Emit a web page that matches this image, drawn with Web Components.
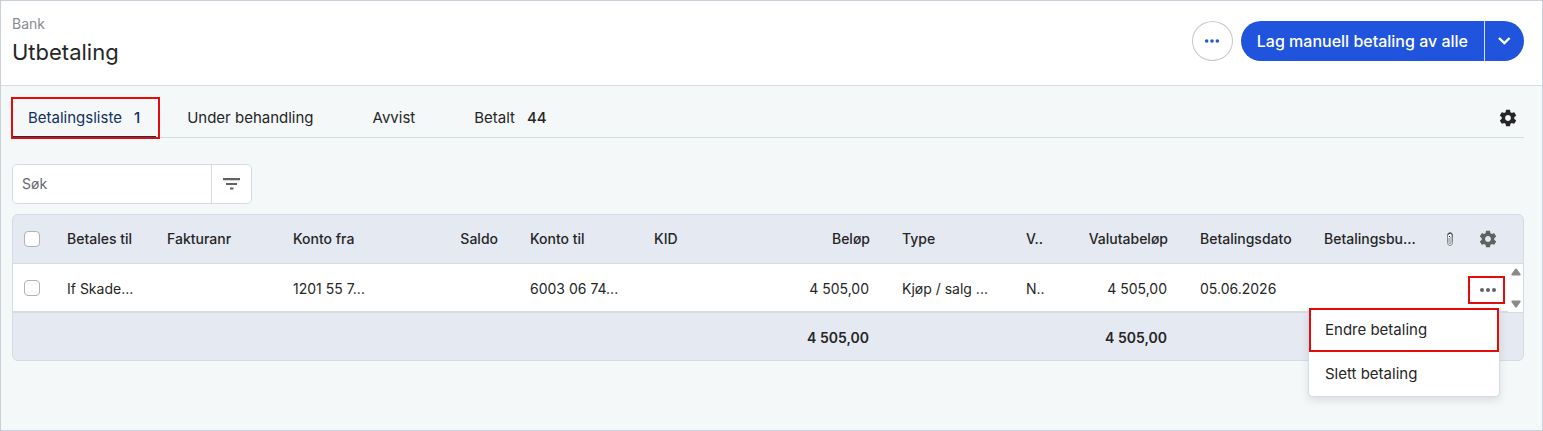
<!DOCTYPE html>
<html lang="no">
<head>
<meta charset="utf-8">
<title>Utbetaling</title>
<style>
  html {
    --text: #262626;
    --muted: #5f6163;
    --line: #d3dbe3;
    --page: #f4f8f9;
    --head: #e5eaf2;
    --primary: #2054dd;
    --active: #15305b;
    --mark: #e60a0a;
  }

  body {
    margin: 0;
    font: 14px/20px Inter, "Liberation Sans", sans-serif;
    color: var(--text);
    background: var(--page);
  }
</style>
</head>
<body>
<payment-app>
  <page-header slot="header" section="Bank" heading="Utbetaling">
    <round-button label="Flere valg"></round-button>
    <split-button>Lag manuell betaling av alle</split-button>
  </page-header>

  <tab-bar>
    <tab-item active count="1"><span>Betalingsliste</span></tab-item>
    <tab-item><span>Under behandling</span></tab-item>
    <tab-item><span>Avvist</span></tab-item>
    <tab-item count="44"><span>Betalt</span></tab-item>
  </tab-bar>

  <search-box placeholder="Søk"></search-box>
  <payment-table></payment-table>
</payment-app>

<script>
const ICONS = {
  gear: `<svg viewBox="0 0 24 24" width="20" height="20" fill="currentColor"><path d="M19.43 12.98c.04-.32.07-.64.07-.98s-.03-.66-.07-.98l2.11-1.65c.19-.15.24-.42.12-.64l-2-3.46c-.12-.22-.39-.3-.61-.22l-2.49 1c-.52-.4-1.08-.73-1.69-.98l-.38-2.65C14.46 2.18 14.25 2 14 2h-4c-.25 0-.46.18-.49.42l-.38 2.65c-.61.25-1.17.59-1.69.98l-2.49-1c-.23-.09-.49 0-.61.22l-2 3.46c-.13.22-.07.49.12.64l2.11 1.65c-.04.32-.07.65-.07.98s.03.66.07.98l-2.11 1.65c-.19.15-.24.42-.12.64l2 3.46c.12.22.39.3.61.22l2.49-1c.52.4 1.08.73 1.69.98l.38 2.65c.03.24.24.42.49.42h4c.25 0 .46-.18.49-.42l.38-2.65c.61-.25 1.17-.59 1.69-.98l2.49 1c.23.09.49 0 .61-.22l2-3.46c.12-.22.07-.49-.12-.64l-2.11-1.65zM12 15.500c-1.930 0-3.500-1.570-3.500-3.500s1.570-3.500 3.500-3.500 3.500 1.570 3.500 3.500-1.570 3.500-3.500 3.500z"/></svg>`,
  dots: `<svg viewBox="0 0 18 6" width="18" height="6" fill="currentColor"><circle cx="3" cy="3" r="2"/><circle cx="9" cy="3" r="2"/><circle cx="15" cy="3" r="2"/></svg>`,
  chevron: `<svg viewBox="0 0 14 8" width="14" height="8" fill="none" stroke="currentColor" stroke-width="2.400"><path d="M1 1l5.300 5 5.300-5"/></svg>`,
  filter: `<svg viewBox="0 0 18 12" width="18" height="12" fill="currentColor"><path d="M0 0h17v2.300H0zM3 5h11v2H3zM7 9.500h3.500v2H7z"/></svg>`,
  clip: `<svg viewBox="0 0 8 14" width="8" height="14" fill="none" stroke="#85878a"><path fill="#f3f5f8" d="M1.500 5V3a2.500 2.300 0 0 1 5 0v7.500a2.500 3 0 0 1-5 0z"/><path d="M3 6v4.500a1 1 0 0 0 2 0V5"/><path stroke="#222" d="M1.700 2.500q2.500-3 4.600 0M3 4.500h1M5.500 4h1"/></svg>`,
  up: `<svg viewBox="0 0 10 8" width="10" height="8" fill="#8b8b8b"><path d="M4 1q1-1.200 2 0l3.500 5q.6 1.500-.8 1.500H1.300Q-.1 7.500.5 6z"/></svg>`,
  down: `<svg viewBox="0 0 10 8" width="10" height="8" fill="#8b8b8b"><path d="M4 7q1 1.200 2 0l3.500-5Q10.100.5 8.700.5H1.300Q-.1.500.5 2z"/></svg>`,
};

const BASE = `
  * { box-sizing: border-box; }
  svg { display: block; }
  button {
    margin: 0;
    padding: 0;
    border: 0;
    background: none;
    font: inherit;
    color: inherit;
    cursor: pointer;
  }
`;

class BaseElement extends HTMLElement {
  constructor() {
    super();
    this.attachShadow({ mode: "open" });
  }

  connectedCallback() {
    this.shadowRoot.innerHTML = `<style>${BASE}${this.constructor.style}</style>${this.content}`;
  }
}

class PaymentApp extends BaseElement {
  static get style() {
    return `
      :host {
        display: flex;
        flex-direction: column;
        box-sizing: border-box;
        min-height: 100vh;
        border: 1px solid #c9d0da;
      }
      main {
        display: flex;
        flex-direction: column;
        padding: 12px 18px 24px 11px;
      }
    `;
  }

  get content() {
    return `<slot name="header"></slot><main><slot></slot></main>`;
  }
}

class PageHeader extends BaseElement {
  static get style() {
    return `
      :host {
        display: flex;
        align-items: flex-start;
        justify-content: space-between;
        padding: 12px 18px 16px 11px;
        background: #fff;
        border-bottom: 1px solid var(--line);
      }
      .section { color: #8a8c90; line-height: 22px; }
      h1 { margin: 0; font-size: 22px; line-height: 34px; font-weight: 400; }
      .actions { display: flex; gap: 8px; padding-top: 8px; }
    `;
  }

  get content() {
    return `
      <div>
        <div class="section">${this.getAttribute("section")}</div>
        <h1>${this.getAttribute("heading")}</h1>
      </div>
      <div class="actions"><slot></slot></div>
    `;
  }
}

class RoundButton extends BaseElement {
  static get style() {
    return `
      :host { display: block; }
      button {
        display: flex;
        align-items: center;
        justify-content: center;
        width: 41px;
        height: 40px;
        border: 1px solid #c8c8c8;
        border-radius: 50%;
        color: var(--primary);
      }
      svg { width: 16px; }
    `;
  }

  get content() {
    return `<button aria-label="${this.getAttribute("label")}">${ICONS.dots}</button>`;
  }
}

class SplitButton extends BaseElement {
  static get style() {
    return `
      :host {
        display: flex;
        height: 40px;
        border-radius: 20px;
        overflow: hidden;
        color: #fff;
        background: var(--primary);
      }
      .main { padding: 0 16px; font-size: 16px; font-weight: 500; }
      .more {
        display: flex;
        align-items: center;
        justify-content: center;
        width: 40px;
        border-left: 1px solid #d5def7;
      }
    `;
  }

  get content() {
    return `
      <button class="main"><slot></slot></button>
      <button class="more" aria-label="Flere handlinger">${ICONS.chevron}</button>
    `;
  }
}

class TabBar extends BaseElement {
  static get style() {
    return `
      :host {
        display: flex;
        justify-content: space-between;
        height: 39px;
        border-bottom: 1px solid var(--line);
      }
      .tabs { display: flex; gap: 15px; }
      .settings { height: 40px; padding: 0 6px; }
    `;
  }

  get content() {
    return `
      <div class="tabs" role="tablist"><slot></slot></div>
      <button class="settings" aria-label="Innstillinger">${ICONS.gear}</button>
    `;
  }
}

class TabItem extends BaseElement {
  static get style() {
    return `
      :host { display: block; position: relative; height: 40px; }
      button {
        display: flex;
        align-items: center;
        gap: 12px;
        height: 40px;
        padding: 2px 16px 0;
        font-size: 15px;
        white-space: nowrap;
        border-bottom: 2px solid transparent;
      }
      .count { font-weight: 500; }
      :host([active]) button {
        color: var(--active);
        border-bottom-color: var(--active);
      }
      :host([active])::after {
        content: "";
        position: absolute;
        inset: -1px -4px -1px -1px;
        border: 2px solid var(--mark);
        pointer-events: none;
      }
    `;
  }

  get content() {
    return `
      <button role="tab" aria-selected="${this.hasAttribute("active")}">
        <slot></slot><span class="count">${this.getAttribute("count") || ""}</span>
      </button>
    `;
  }
}

class SearchBox extends BaseElement {
  static get style() {
    return `
      :host {
        display: flex;
        align-self: flex-start;
        box-sizing: border-box;
        height: 40px;
        margin: 26px 0 10px;
        border: 1px solid var(--line);
        border-radius: 5px;
        background: #fff;
        overflow: hidden;
      }
      input {
        width: 198px;
        padding: 0 9px;
        border: 0;
        outline: 0;
        background: none;
        font: inherit;
        color: inherit;
      }
      input::placeholder { color: #66686b; opacity: 1; }
      button {
        display: flex;
        align-items: center;
        justify-content: center;
        width: 40px;
        border-left: 1px solid var(--line);
        color: var(--muted);
      }
    `;
  }

  get content() {
    let text = this.getAttribute("placeholder");
    return `
      <input type="text" placeholder="${text}" aria-label="${text}">
      <button aria-label="Filter">${ICONS.filter}</button>
    `;
  }
}

class RowMenu extends BaseElement {
  static get style() {
    return `
      :host { display: block; position: relative; }
      .trigger {
        display: flex;
        align-items: center;
        justify-content: center;
        width: 100%;
        height: 28px;
        color: var(--muted);
      }
      :host::after {
        content: "";
        position: absolute;
        inset: 0 3px 0 0;
        border: 2px solid var(--mark);
        pointer-events: none;
      }
      .menu {
        position: absolute;
        z-index: 1;
        top: 32px;
        right: 8px;
        width: 192px;
        border: 1px solid var(--line);
        border-top: 0;
        border-radius: 5px;
        background: #fff;
        box-shadow: 0 4px 8px rgba(0, 0, 0, 0.1);
      }
      .menu button {
        display: block;
        width: 100%;
        height: 44px;
        padding: 0 14px;
        border: 2px solid transparent;
        font-size: 15px;
        text-align: start;
      }
      .menu .marked { border-color: var(--mark); }
    `;
  }

  get content() {
    return `
      <button class="trigger" aria-label="Radmeny" aria-expanded="true">${ICONS.dots}</button>
      <div class="menu" role="menu">
        <button role="menuitem" class="marked">Endre betaling</button>
        <button role="menuitem">Slett betaling</button>
      </div>
    `;
  }
}

const COLUMNS = [
  { width: 100, label: "Betales til", value: "If Skade..." },
  { width: 126, label: "Fakturanr" },
  { width: 126, label: "Konto fra", value: "1201 55 7..." },
  { width: 111, label: "Saldo", number: true },
  { width: 124, label: "Konto til", value: "6003 06 74..." },
  { width: 124, label: "KID" },
  { width: 124, label: "Beløp", value: "4 505,00", sum: "4 505,00", number: true },
  { width: 124, label: "Type", value: "Kjøp / salg ..." },
  { width: 50, label: "V..", value: "N.." },
  { width: 124, label: "Valutabeløp", value: "4 505,00", sum: "4 505,00", number: true },
  { width: 124, label: "Betalingsdato", value: "05.06.2026" },
  { width: 124, label: "Betalingsbu..." },
];

class PaymentTable extends BaseElement {
  static get style() {
    return `
      :host {
        display: block;
        border: 1px solid var(--line);
        border-radius: 6px;
        background: var(--head);
      }
      table {
        width: 100%;
        table-layout: fixed;
        border-collapse: separate;
        border-spacing: 0;
      }
      th, td {
        height: 48px;
        padding: 0 16px;
        text-align: start;
        white-space: nowrap;
      }
      th { height: 49px; font-weight: 500; border-bottom: 1px solid var(--line); }
      td { padding-top: 2px; }
      tbody td { background: #fff; border-bottom: 1px solid var(--line); }
      tfoot td { font-weight: 600; border-top: 1px solid var(--line); }
      .number { text-align: end; }
      td.number { padding-right: 17px; }
      .check { padding: 0 11px; }
      .icon { padding: 0; }
      .icon svg { margin: 0 auto; }
      .icon button { display: block; width: 100%; color: var(--muted); }
      .menu { padding: 4px 0 0; }
      tbody .scroll { border-bottom-color: #fff; }
      .scroll div {
        display: flex;
        flex-direction: column;
        justify-content: space-between;
        height: 40px;
      }
      input {
        appearance: none;
        display: block;
        width: 16px;
        height: 16px;
        margin: 0;
        border: 1px solid #adb2b9;
        border-radius: 4px;
        background: #fff;
      }
    `;
  }

  cells(tag, key) {
    return COLUMNS.map(col => `<${tag}${col.number ? ' class="number"' : ""}>${col[key] || ""}</${tag}>`).join("");
  }

  get content() {
    return `
      <table>
        <colgroup>
          <col style="width: 38px">
          ${COLUMNS.map(col => `<col style="width: ${col.width}px">`).join("")}
          <col style="width: 36px"><col style="width: 40px"><col style="width: 15px">
        </colgroup>
        <thead>
          <tr>
            <th class="check"><input type="checkbox" aria-label="Velg alle"></th>
            ${this.cells("th", "label")}
            <th class="icon">${ICONS.clip}</th>
            <th class="icon"><button aria-label="Kolonner">${ICONS.gear}</button></th>
            <th class="icon"></th>
          </tr>
        </thead>
        <tbody>
          <tr>
            <td class="check"><input type="checkbox" aria-label="Velg rad"></td>
            ${this.cells("td", "value")}
            <td class="icon"></td>
            <td class="menu"><row-menu></row-menu></td>
            <td class="icon scroll"><div>${ICONS.up}${ICONS.down}</div></td>
          </tr>
        </tbody>
        <tfoot>
          <tr>
            <td></td>
            ${this.cells("td", "sum")}
            <td class="icon"></td><td class="icon"></td><td class="icon"></td>
          </tr>
        </tfoot>
      </table>
    `;
  }
}

customElements.define("payment-app", PaymentApp);
customElements.define("page-header", PageHeader);
customElements.define("round-button", RoundButton);
customElements.define("split-button", SplitButton);
customElements.define("tab-bar", TabBar);
customElements.define("tab-item", TabItem);
customElements.define("search-box", SearchBox);
customElements.define("row-menu", RowMenu);
customElements.define("payment-table", PaymentTable);
</script>
</body>
</html>
